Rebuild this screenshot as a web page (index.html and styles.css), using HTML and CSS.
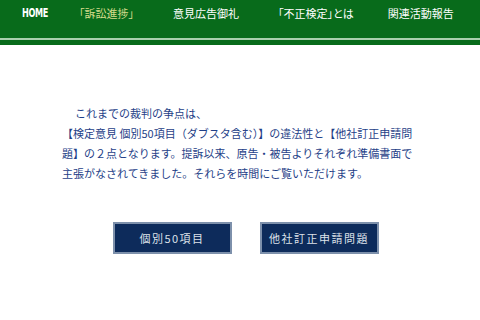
FILE: index.html
```html
<!DOCTYPE html>
<html lang="ja">
<head>
    <meta charset="UTF-8">
    <meta name="viewport" content="width=device-width, initial-scale=1.0">
    <title>訴訟進捗</title>
    <link rel="stylesheet" href="styles.css">
</head>
<body>
    <header class="header">
        <nav class="menu">
            <a class="menu-item home" href="#"><span>HOME</span></a>
            <a class="menu-item active" href="#">「訴訟進捗」</a>
            <a class="menu-item" href="#">意見広告御礼</a>
            <a class="menu-item" href="#">「不正検定」とは</a>
            <a class="menu-item" href="#">関連活動報告</a>
        </nav>
        <div class="header-line"></div>
    </header>
    <main class="content">
        <p class="intro">これまでの裁判の争点は、<br>【検定意見 個別50項目（ダブスタ含む）】の違法性と【他社訂正申請問題】の２点となります。提訴以来、原告・被告よりそれぞれ準備書面で主張がなされてきました。それらを時間にご覧いただけます。</p>
        <div class="buttons">
            <a class="btn" href="#">個別50項目</a>
            <a class="btn" href="#">他社訂正申請問題</a>
        </div>
    </main>
</body>
</html>
```

FILE: styles.css
```css
body {
    margin: 0;
    font-family: "Noto Sans CJK JP", sans-serif;
    background: #fff;
}
.header {
    background-color: #086b1b;
}
.menu {
    display: flex;
    gap: 39px;
    height: 38px;
    padding-left: 22px;
    font-feature-settings: "palt";
}
.menu-item {
    flex-shrink: 0;
    white-space: nowrap;
    height: 26px;
    line-height: 26px;
    font-size: 11px;
    color: #fff;
    text-decoration: none;
}
.menu-item:last-child {
    margin-left: -5px;
}
.menu-item.home {
    width: 24px;
    margin-right: -6px;
    font-family: "DejaVu Sans", sans-serif;
    font-weight: bold;
    font-size: 12px;
    letter-spacing: -0.5px;
}
.menu-item.home span {
    display: inline-block;
    transform: scaleX(0.68);
    transform-origin: left center;
}
.menu-item.active {
    color: #d6dc8c;
}
.header-line {
    height: 7px;
    border-top: 2px solid #a9cfae;
    box-sizing: border-box;
}
.content {
    padding-top: 58px;
}
.intro {
    width: 356px;
    margin: 0 0 0 62px;
    font-size: 11px;
    line-height: 20px;
    color: #1f3f88;
    text-indent: 13px;
}
.buttons {
    display: flex;
    justify-content: center;
    gap: 28px;
    margin-top: 39px;
    padding-left: 11px;
}
.btn {
    width: 119px;
    height: 32px;
    box-sizing: border-box;
    display: flex;
    align-items: center;
    justify-content: center;
    background-color: #0d2b5b;
    border: 2px solid #7d90ab;
    color: #dde2ea;
    font-size: 11px;
    letter-spacing: 1.5px;
    text-decoration: none;
}
```
